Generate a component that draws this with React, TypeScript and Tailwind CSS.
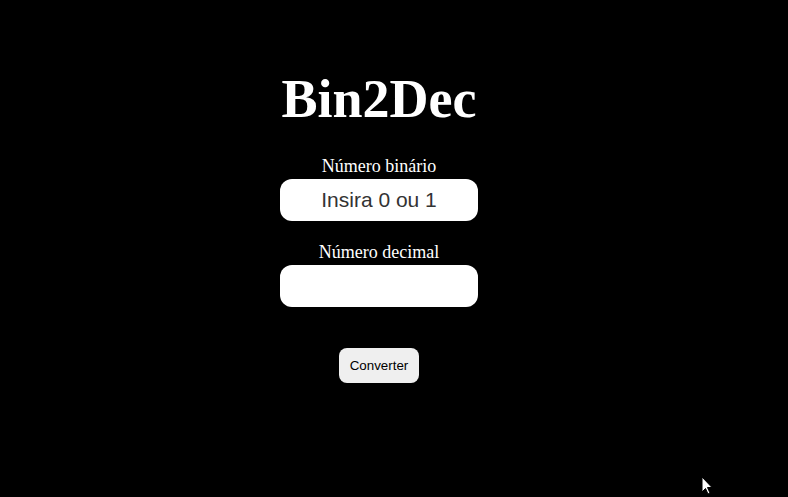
import { useState } from 'react'

export default function App() {
  const [binary, setBinary] = useState('')
  const [decimal, setDecimal] = useState('')

  const convert = () => {
    if (!/^[01]+$/.test(binary)) return
    setDecimal(String(parseInt(binary, 2)))
  }

  return (
    <div className="relative h-[497px] w-full overflow-hidden bg-black">
      <main className="flex flex-col items-center pr-[30px] pt-[69px]">
        <h1 className="font-['Liberation_Serif',serif] text-[54px] font-bold leading-[60px] text-white">
          Bin2Dec
        </h1>

        <label
          htmlFor="binary"
          className="mt-[27px] font-['Liberation_Serif',serif] text-[18px] leading-[20px] text-white"
        >
          Número binário
        </label>
        <input
          id="binary"
          value={binary}
          onChange={(e) => setBinary(e.target.value)}
          placeholder="Insira 0 ou 1"
          className="mt-[3px] h-[42px] w-[198px] rounded-[12px] bg-white text-center font-['Liberation_Sans',Arial,sans-serif] text-[21px] text-[#333] outline-none placeholder:text-[#333]"
        />

        <label
          htmlFor="decimal"
          className="mt-[21px] font-['Liberation_Serif',serif] text-[18px] leading-[20px] text-white"
        >
          Número decimal
        </label>
        <input
          id="decimal"
          value={decimal}
          readOnly
          className="mt-[3px] h-[42px] w-[198px] rounded-[12px] bg-white text-center font-['Liberation_Sans',Arial,sans-serif] text-[21px] text-[#333] outline-none"
        />

        <button
          onClick={convert}
          className="mt-[41px] h-[35px] w-[80px] rounded-[8px] bg-[#efefef] font-['Liberation_Sans',Arial,sans-serif] text-[13.33px] text-black"
        >
          Converter
        </button>
      </main>

      {/* mouse pointer seen in the capture */}
      <svg
        className="absolute left-[701px] top-[476px]"
        width="13"
        height="20"
        viewBox="0 0 13 20"
      >
        <path d="M1 1 L1 16 L4.5 12.5 L7 18 L9 17 L6.5 11.5 L11 11.5 Z" fill="#fff" stroke="#000" strokeWidth="1" />
      </svg>
    </div>
  )
}
